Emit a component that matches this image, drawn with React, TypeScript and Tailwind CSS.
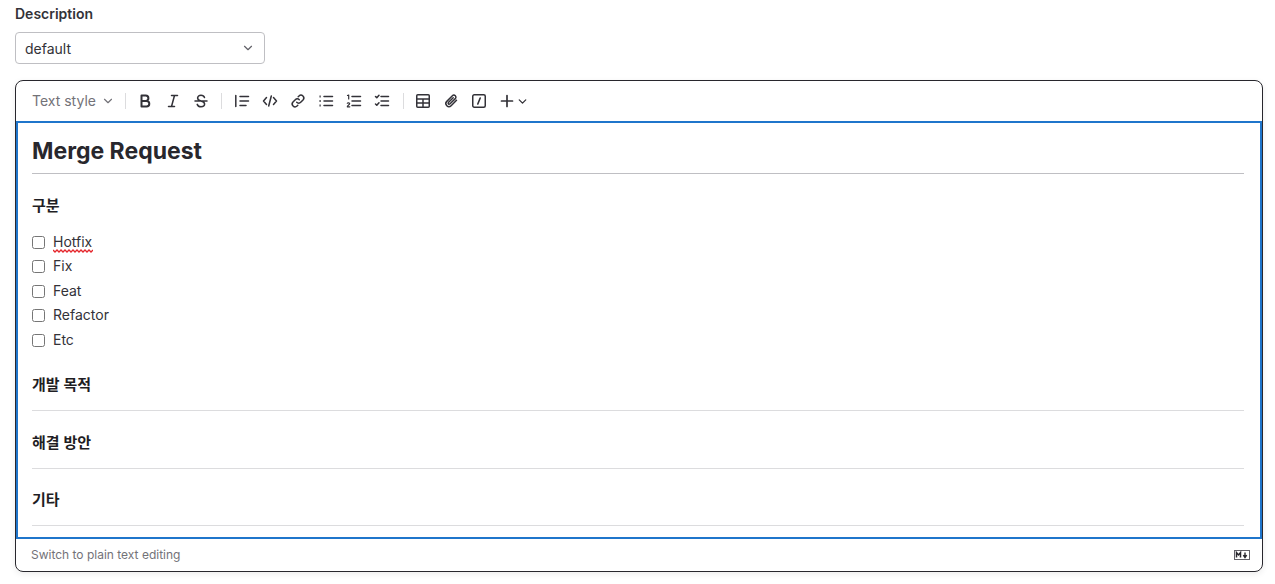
import { ChevronDown } from "lucide-react";
import type { ReactNode } from "react";

const font = { fontFamily: '"Inter", "Noto Sans CJK KR", sans-serif' };

function Icon({ children }: { children: ReactNode }) {
  return (
    <svg width="16" height="16" viewBox="0 0 16 16" fill="none" stroke="#333238" strokeWidth="1.5" strokeLinecap="round" strokeLinejoin="round">
      {children}
    </svg>
  );
}

function ToolButton({ children }: { children: ReactNode }) {
  return <div className="flex h-7 w-7 items-center justify-center">{children}</div>;
}

function Divider({ className }: { className: string }) {
  return <div className={`h-[16px] w-px bg-[#dcdcde] ${className}`} />;
}

function Section({ title }: { title: string }) {
  return (
    <div className="mt-[21.75px]">
      <h3 className="flex h-[20px] items-center text-[15px] font-semibold leading-[20px] text-[#1f1e24]">{title}</h3>
      <div className="mt-[15px] h-px bg-[#dcdcde]" />
    </div>
  );
}

// spell-check squiggle under a misspelled word
function Squiggle() {
  return (
    <svg width="40" height="4" viewBox="0 0 40 4" fill="none" className="absolute left-0 top-[18px]">
      <path d="M0 1 2 3 4 1 6 3 8 1 10 3 12 1 14 3 16 1 18 3 20 1 22 3 24 1 26 3 28 1 30 3 32 1 34 3 36 1 38 3 40 1" stroke="#e5262c" strokeWidth="1.3" />
    </svg>
  );
}

export default function App() {
  const items = ["Hotfix", "Fix", "Feat", "Refactor", "Etc"];
  return (
    <div className="h-[584px] w-[1275px] overflow-hidden bg-white px-[15px] pt-[4px]" style={font}>
      <label className="block h-[20px] text-[14px] font-semibold leading-[20px] text-[#333238]">Description</label>
      <button className="mt-[8px] flex h-[32px] w-[250px] items-center justify-between rounded-[4px] border border-[#bfbfc3] pl-[9px] pr-[9px] text-[14px] text-[#333238]">
        default
        <ChevronDown size={14} color="#626168" strokeWidth={2} />
      </button>

      <div className="mt-[16px] w-[1248px] overflow-hidden rounded-[8px] border border-[#28272d] shadow-[0_2px_6px_rgba(0,0,0,0.08)]">
        <div className="flex h-[40px] items-center pl-[16px]">
          <div className="-mt-[1px] flex items-center gap-[5px] text-[14px] text-[#737278]">
            Text style
            <ChevronDown size={14} color="#737278" strokeWidth={2} />
          </div>
          <Divider className="ml-[10px] mr-[5px]" />
          <ToolButton>
            <Icon><path d="M4.500 2.500h4.200a2.700 2.700 0 0 1 0 5.400H4.500zM4.500 7.900h5a2.800 2.800 0 0 1 0 5.600h-5z" strokeWidth="2" /></Icon>
          </ToolButton>
          <ToolButton>
            <Icon><path d="M6.500 2.500h6M3.500 13.500h6M9.500 2.500l-3 11" /></Icon>
          </ToolButton>
          <ToolButton>
            <Icon><path d="M2 8h12M11.500 4.500C11 3 9.700 2.200 8 2.200 6 2.200 4.600 3.300 4.600 5c0 1.300.8 2.300 3.400 3 2.700.7 3.600 1.700 3.600 3.100 0 1.700-1.500 2.700-3.600 2.700-1.900 0-3.200-.9-3.800-2.400" /></Icon>
          </ToolButton>
          <Divider className="ml-[6px] mr-[6px]" />
          <ToolButton>
            <Icon><path d="M1.800 2.500v11M6 3.500h8.500M6 8h8.500M6 12.500h6" /></Icon>
          </ToolButton>
          <ToolButton>
            <Icon><path d="M4.500 4.500 1.500 8l3 3.500M11.500 4.500l3 3.500-3 3.500M9.300 3 6.700 13" /></Icon>
          </ToolButton>
          <ToolButton>
            <Icon><path d="M6.700 9.300a2.800 2.800 0 0 0 4 0l2.300-2.300a2.830 2.830 0 0 0-4-4l-.8.8M9.300 6.700a2.800 2.800 0 0 0-4 0L3 9a2.830 2.830 0 0 0 4 4l.8-.8" /></Icon>
          </ToolButton>
          <ToolButton>
            <Icon>
              <path d="M6 3.500h8.500M6 8h8.500M6 12.500h8.500" />
              <path d="M1.500 3.500h1.200M1.500 8h1.200M1.500 12.500h1.200" strokeWidth="2" strokeLinecap="butt" />
            </Icon>
          </ToolButton>
          <ToolButton>
            <Icon>
              <path d="M6 3.500h8.500M6 8h8.500M6 12.500h8.500" />
              <path d="M1.500 2.500 2.700 2v4" strokeWidth="1.200" />
              <path d="M1.300 10.300c.3-.6 2.400-.7 2.400.5 0 1-2.400 1.700-2.400 3h2.500" strokeWidth="1.200" />
            </Icon>
          </ToolButton>
          <ToolButton>
            <Icon>
              <path d="M7 3.500h7.500M7 8h7.500M7 12.500h7.500" />
              <path d="m1.500 3.500 1.300 1.300L5 2.200M1.500 11l1.300 1.300L5 9.700" />
            </Icon>
          </ToolButton>
          <Divider className="ml-[7px] mr-[5px]" />
          <ToolButton>
            <Icon>
              <rect x="1.750" y="1.750" width="12.500" height="12.500" rx="1" />
              <path d="M1.750 6h12.500M1.750 10h12.500M8 6v8.250" />
            </Icon>
          </ToolButton>
          <ToolButton>
            <Icon><path d="m13.500 7.200-5.400 5.500a3 3 0 0 1-4.300-4.300l5.600-5.700a2 2 0 0 1 2.900 2.900L6.800 11a1 1 0 0 1-1.400-1.400l4.800-4.900" /></Icon>
          </ToolButton>
          <ToolButton>
            <Icon>
              <rect x="1.750" y="1.750" width="12.500" height="12.500" rx="1.500" />
              <path d="M9.200 5 6.800 11" strokeWidth="1.600" />
            </Icon>
          </ToolButton>
          <div className="ml-[7px] flex items-center">
            <svg width="14" height="14" viewBox="0 0 14 14" fill="none" stroke="#333238" strokeWidth="1.700" strokeLinecap="round">
              <path d="M7 1.500v11M1.500 7h11" />
            </svg>
            <ChevronDown size={13} color="#333238" strokeWidth={2.400} className="ml-[2px]" />
          </div>
        </div>

        <div className="h-[418px] border-2 border-[#1f75cb] pl-[14px] pr-[16px] pt-[9px]">
          <h1 className="h-[42px] border-b border-[#bfbfc3] text-[23px] font-bold leading-[38px] text-[#28272d]">Merge Request</h1>
          <h3 className="mt-[22px] flex h-[20px] items-center text-[15px] font-semibold leading-[20px] text-[#1f1e24]">구분</h3>
          <ul className="mt-[14px] pb-[0.5px]">
            {items.map((item) => (
              <li key={item} className="flex h-[24.5px] items-center gap-[8px] text-[14px] text-[#333238]">
                <span className="h-[13px] w-[13px] rounded-[2.500px] border border-[#767676] bg-white" />
                <span className="relative pb-[2px]">
                  {item}
                  {item === "Hotfix" && <Squiggle />}
                </span>
              </li>
            ))}
          </ul>
          <Section title="개발 목적" />
          <Section title="해결 방안" />
          <Section title="기타" />
        </div>

        <div className="flex h-[32px] items-center justify-between pl-[15px] pr-[12px] text-[12px] text-[#737278]">
          Switch to plain text editing
          <svg width="16" height="10" viewBox="0 0 16 10" fill="none">
            <rect x=".5" y=".5" width="15" height="9" fill="white" stroke="#626168" />
            <path d="M2.500 7.500v-5l2 2.400 2-2.400v5" stroke="#28272d" strokeWidth="1.500" />
            <path d="M11 2.500v4M9.300 5.200 11 7.500l1.700-2.300" stroke="#28272d" strokeWidth="1.400" />
          </svg>
        </div>
      </div>
    </div>
  );
}
